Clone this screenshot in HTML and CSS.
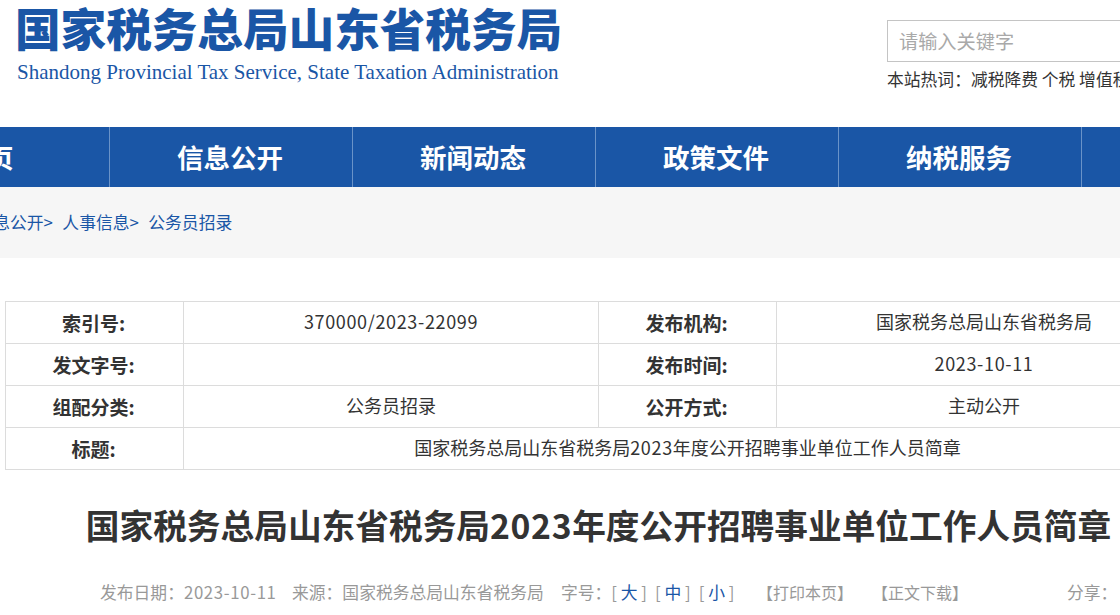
FILE: index.html
```html
<!DOCTYPE html>
<html lang="zh-CN">
<head>
  <meta charset="UTF-8">
  <meta name="viewport" content="width=device-width, initial-scale=1.0">
  <title>国家税务总局山东省税务局</title>
  <link rel="stylesheet" href="styles.css">
</head>
<body>
  <header class="top">
    <div class="logo">
      <div class="logo-cn">国家税务总局山东省税务局</div>
      <div class="logo-en">Shandong Provincial Tax Service, State Taxation Administration</div>
    </div>
    <div class="search">
      <div class="search-box">请输入关键字</div>
      <div class="hot">本站热词：减税降费 个税 增值税</div>
    </div>
  </header>

  <nav class="navbar">
    <a href="#">首页</a>
    <a href="#">信息公开</a>
    <a href="#">新闻动态</a>
    <a href="#">政策文件</a>
    <a href="#">纳税服务</a>
    <a href="#">互动交流</a>
  </nav>

  <div class="crumb">
    <div class="crumb-in">
      <a href="#">首页&gt;</a>
      <a href="#">信息公开&gt;</a>
      <a href="#">人事信息&gt;</a>
      <a href="#">公务员招录</a>
    </div>
  </div>

  <main class="page">
    <table class="info">
      <colgroup>
        <col class="c-label"><col class="c-value"><col class="c-label"><col class="c-value">
      </colgroup>
      <tr>
        <th>索引号:</th><td><span class="num">370000/2023-22099</span></td>
        <th>发布机构:</th><td>国家税务总局山东省税务局</td>
      </tr>
      <tr>
        <th>发文字号:</th><td></td>
        <th>发布时间:</th><td><span class="num">2023-10-11</span></td>
      </tr>
      <tr>
        <th>组配分类:</th><td>公务员招录</td>
        <th>公开方式:</th><td>主动公开</td>
      </tr>
      <tr>
        <th>标题:</th><td colspan="3">国家税务总局山东省税务局<span class="num">2023</span>年度公开招聘事业单位工作人员简章</td>
      </tr>
    </table>

    <h1 class="title">国家税务总局山东省税务局<span class="num">2023</span>年度公开招聘事业单位工作人员简章</h1>

    <div class="meta">
      <span class="m-date">发布日期：<span class="num">2023-10-11</span></span>
      <span class="m-src">来源：国家税务总局山东省税务局</span>
      <span class="m-size">字号：<span class="sz">[ <a href="#">大</a> ]</span><span class="sz">[ <a href="#">中</a> ]</span><span class="sz">[ <a href="#">小</a> ]</span></span>
      <span class="m-print">【打印本页】</span>
      <span class="m-down">【正文下载】</span>
      <span class="m-share">分享：</span>
    </div>
  </main>
</body>
</html>
```

FILE: styles.css
```css
:root {
  --primary-color: #1a56a6;
  --text-color: #333;
  --line-color: #dcdcdc;
}
* { margin: 0; padding: 0; box-sizing: border-box; font-family: "Noto Sans CJK SC", "Noto Sans", sans-serif; }
html, body { overflow: hidden; height: 615px; }
body { background: white; color: var(--text-color); width: 1120px; }
a { color: inherit; text-decoration: none; }
.num { letter-spacing: 0.65px; }

/* Header */
.top { display: flex; height: 127px; padding-left: 15px; }
.logo { width: 872px; flex: none; color: var(--primary-color); }
.logo-cn { font-size: 45.6px; line-height: 54px; font-weight: 900; white-space: nowrap; }
.logo-en { font-family: "Liberation Serif", serif; font-size: 21px; line-height: 24px; margin-top: 6px; padding-left: 2px; white-space: nowrap; }
.search { padding-top: 20px; width: 400px; flex: none; }
.search-box { height: 42px; border: 1px solid #c4c4c4; border-right: 0; padding-left: 11px; font-size: 19.2px; line-height: 40px; color: #a9a9a9; }
.hot { font-size: 16.8px; line-height: 24px; margin-top: 5px; white-space: nowrap; }

/* Nav */
.navbar { display: flex; height: 60px; width: 1500px; margin-left: -133px; background: var(--primary-color); }
.navbar a { width: 243px; flex: none; border-right: 1px solid #6a93c8; padding-right: 2px; color: white; font-size: 26.5px; font-weight: 700; line-height: 59px; text-align: center; }

/* Breadcrumb */
.crumb { height: 71px; background: #f6f6f6; overflow: hidden; }
.crumb-in { display: flex; gap: 9.5px; margin-left: -76px; font-size: 16.8px; line-height: 71px; color: var(--primary-color); white-space: nowrap; }

/* Info table */
.page { width: 1200px; margin-left: -1px; padding: 43px 7px 0 6px; }
.info { width: 1187px; border-collapse: collapse; table-layout: fixed; font-size: 18px; }
.c-label { width: 178px; }
.c-value { width: 415px; }
.info th, .info td { height: 42px; border: 1px solid var(--line-color); text-align: center; line-height: 38px; font-weight: 400; }
.info td { padding-bottom: 3px; }
.info th { font-size: 19px; font-weight: 700; padding: 1px 2px 0 0; }

/* Title + meta */
.title { font-size: 33.7px; line-height: 46px; font-weight: 700; text-align: center; margin-top: 32px; white-space: nowrap; }
.meta { display: flex; font-size: 16.8px; line-height: 24px; color: #999; margin-top: 32px; padding-left: 95px; white-space: nowrap; }
.meta a { color: var(--primary-color); }
.sz { margin-right: 8px; }
.m-date { width: 192px; }
.m-src { width: 269px; }
.m-size { width: 196px; }
.m-print { width: 115px; font-size: 16px; }
.m-down { width: 195px; font-size: 16px; }
```
